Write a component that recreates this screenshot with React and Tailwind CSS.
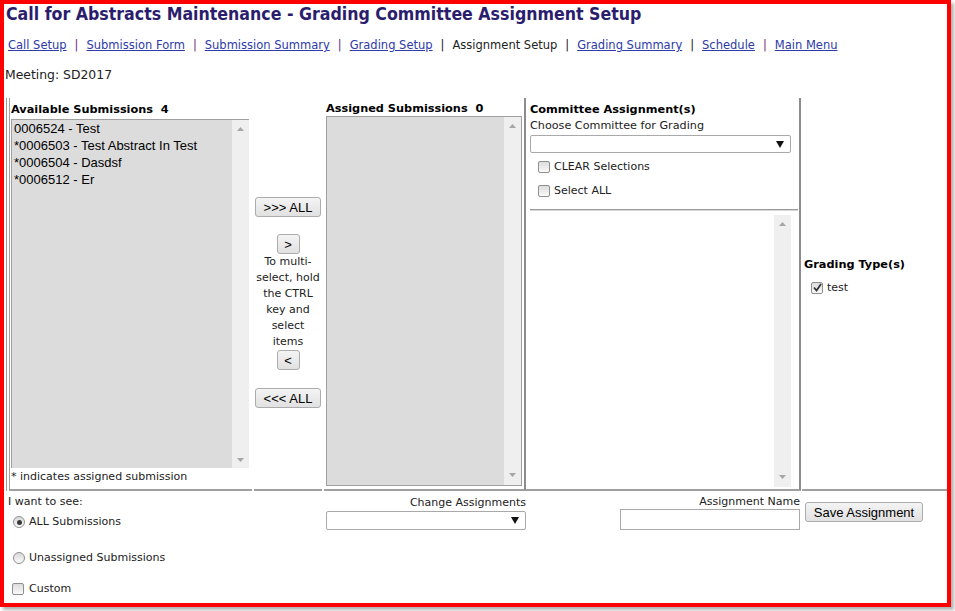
import React from "react";

const Arrow = ({ dir }) => (
  <svg width="7" height="4" viewBox="0 0 7 4">
    {dir === "up" ? (
      <path d="M0 4 L3.5 0 L7 4 Z" fill="#a6a6a6" />
    ) : (
      <path d="M0 0 L7 0 L3.5 4 Z" fill="#a6a6a6" />
    )}
  </svg>
);

const SelArrow = () => (
  <svg width="8" height="7" viewBox="0 0 8 7">
    <path d="M0 0 L8 0 L4 7 Z" fill="#111" />
  </svg>
);

const Btn = ({ children, className }) => (
  <div
    className={`flex items-center justify-center h-[20px] border border-[#acacac] rounded-[3px] bg-linear-to-b from-[#f4f4f4] to-[#e1e1e1] font-['Liberation_Sans',Arial,sans-serif] text-[13px] leading-none text-black ${className}`}
  >
    {children}
  </div>
);

const Check = ({ checked }) => (
  <span className="relative inline-block w-[12px] h-[12px] border border-[#8f8f8f] rounded-[2px] bg-linear-to-b from-[#dcdcdc] to-[#fafafa] shrink-0">
    {checked && (
      <svg className="absolute left-[1px] top-[0px]" width="9" height="9" viewBox="0 0 9 9">
        <path d="M1 4.5 L3.5 7.5 L8 1" stroke="#333" strokeWidth="1.8" fill="none" />
      </svg>
    )}
  </span>
);

const Radio = ({ checked }) => (
  <span className="relative flex items-center justify-center w-[12px] h-[12px] border border-[#8f8f8f] rounded-full bg-linear-to-b from-[#d8d8d8] to-[#fbfbfb] shrink-0">
    {checked && <span className="w-[5px] h-[5px] rounded-full bg-[#3a3a3a]" />}
  </span>
);

const Select = ({ className }) => (
  <div className={`flex items-center justify-end bg-white border border-[#a9a9a9] rounded-[2px] pr-[6px] ${className}`}>
    <SelArrow />
  </div>
);

export default function App() {
  const items = [
    "0006524 - Test",
    "*0006503 - Test Abstract In Test",
    "*0006504 - Dasdsf",
    "*0006512 - Er",
  ];
  return (
    <div className="w-[955px] h-[611px] bg-white">
      <div className="w-[951px] h-[607px] border-4 border-[#ff0000] shadow-[3px_3px_3px_rgba(0,0,0,0.3)] overflow-hidden font-['DejaVu_Sans',Verdana,sans-serif] text-[#222] flex flex-col">
        {/* title */}
        <div className="pl-[2px] h-[20px] leading-[20px] text-[17.6px] font-bold text-[#2b1d6e] font-['DejaVu_Sans_Condensed','DejaVu_Sans',sans-serif] whitespace-nowrap">
          Call for Abstracts Maintenance - Grading Committee Assignment Setup
        </div>
        {/* nav */}
        <div className="mt-[13px] pl-[4px] h-[16px] leading-[16px] text-[11.5px] flex items-center whitespace-nowrap">
          <a className="underline text-[#2d3aa8]">Call Setup</a>
          <span className="mx-[8px] text-[#7a2a7a]">|</span>
          <a className="underline text-[#2d3aa8]">Submission Form</a>
          <span className="mx-[8px] text-[#7a2a7a]">|</span>
          <a className="underline text-[#2d3aa8]">Submission Summary</a>
          <span className="mx-[8px] text-[#7a2a7a]">|</span>
          <a className="underline text-[#2d3aa8]">Grading Setup</a>
          <span className="mx-[8px] text-[#222]">|</span>
          <span className="text-[#222]">Assignment Setup</span>
          <span className="mx-[8px] text-[#222]">|</span>
          <a className="underline text-[#2d3aa8]">Grading Summary</a>
          <span className="mx-[8px] text-[#222]">|</span>
          <a className="underline text-[#2d3aa8]">Schedule</a>
          <span className="mx-[8px] text-[#7a2a7a]">|</span>
          <a className="underline text-[#2d3aa8]">Main Menu</a>
        </div>
        {/* meeting */}
        <div className="mt-[14px] pl-[1px] h-[16px] leading-[16px] text-[12.4px]">Meeting: SD2017</div>

        {/* table */}
        <div className="mt-[15px] ml-[2px] h-[393px] flex border-l border-[#9a9a9a] pl-[2px]">
          {/* col1 */}
          <div className="w-[243px] flex flex-col border-l border-b-2 border-[#a0a0a0]">
            <div className="pl-[1px] pt-[5px] leading-[14px] text-[11.3px] font-bold text-black whitespace-pre">
              {"Available Submissions  4"}
            </div>
            <div className="ml-[1px] mt-[2px] w-[238px] h-[349px] flex border-t border-l border-[#a0a0a0] bg-[#dcdcdc]">
              <div className="flex-1 pl-[2px] font-['Liberation_Sans',Arial,sans-serif] text-[13px] leading-[17px] text-black">
                {items.map((t) => (
                  <div key={t}>{t}</div>
                ))}
              </div>
              <div className="w-[17px] bg-[#efefef] flex flex-col items-center justify-between pt-[7px] pb-[6px]">
                <Arrow dir="up" />
                <Arrow dir="down" />
              </div>
            </div>
            <div className="mt-[2px] pl-[1px] leading-[14px] text-[11px]">* indicates assigned submission</div>
          </div>

          {/* col2 */}
          <div className="ml-[2px] w-[68px] flex flex-col items-center border-b-2 border-[#a0a0a0] pt-[99px]">
            <Btn className="w-[66px]">&gt;&gt;&gt; ALL</Btn>
            <Btn className="w-[23px] mt-[17px]">&gt;</Btn>
            <div className="text-center text-[11px] leading-[16px] whitespace-nowrap">
              To multi-
              <br />
              select, hold
              <br />
              the CTRL
              <br />
              key and
              <br />
              select
              <br />
              items
            </div>
            <Btn className="w-[23px]">&lt;</Btn>
            <Btn className="w-[66px] mt-[18px]">&lt;&lt;&lt; ALL</Btn>
          </div>

          {/* col3 */}
          <div className="ml-[2px] w-[200px] flex flex-col border-b-2 border-[#a0a0a0]">
            <div className="pl-[2px] pt-[4px] leading-[14px] text-[11.3px] font-bold text-black whitespace-pre">
              {"Assigned Submissions  0"}
            </div>
            <div className="ml-[2px] w-[196px] h-[370px] flex border border-[#a0a0a0] bg-[#dcdcdc]">
              <div className="flex-1" />
              <div className="w-[17px] bg-[#efefef] flex flex-col items-center justify-between pt-[7px] pb-[8px]">
                <Arrow dir="up" />
                <Arrow dir="down" />
              </div>
            </div>
          </div>

          {/* col4 */}
          <div className="w-[277px] flex flex-col border-l-2 border-r-2 border-b-2 border-l-[#8c8c8c] border-r-[#8c8c8c] border-b-[#a0a0a0]">
            <div className="pl-[4px] pt-[5px] leading-[14px] text-[11.3px] font-bold text-black">Committee Assignment(s)</div>
            <div className="pl-[4px] mt-[2px] leading-[14px] text-[11.2px]">Choose Committee for Grading</div>
            <Select className="ml-[4px] mt-[2px] w-[261px] h-[18px]" />
            <div className="ml-[12px] mt-[7px] h-[14px] flex items-center gap-[4px] text-[11px]">
              <Check />
              <span>CLEAR Selections</span>
            </div>
            <div className="ml-[12px] mt-[10px] h-[14px] flex items-center gap-[4px] text-[11px]">
              <Check />
              <span>Select ALL</span>
            </div>
            <div className="ml-[4px] mr-[1px] mt-[11px] h-[2px] border-t border-b border-t-[#9a9a9a] border-b-[#d8d8d8]" />
            <div className="ml-[4px] mt-[4px] w-[261px] h-[272px] flex bg-white">
              <div className="flex-1" />
              <div className="w-[17px] bg-[#efefef] flex flex-col items-center justify-between pt-[7px] pb-[8px]">
                <Arrow dir="up" />
                <Arrow dir="down" />
              </div>
            </div>
          </div>

          {/* col5 */}
          <div className="ml-[1px] flex-1 flex flex-col border-b-2 border-[#a0a0a0] pl-[2px] pt-[160px]">
            <div className="leading-[14px] text-[11.3px] font-bold text-black">Grading Type(s)</div>
            <div className="ml-[7px] mt-[9px] h-[14px] flex items-center gap-[4px] text-[11px]">
              <Check checked />
              <span>test</span>
            </div>
          </div>
        </div>

        {/* bottom row */}
        <div className="flex flex-1">
          <div className="w-[320px] pl-[4px] pt-[4px] text-[11px]">
            <div className="leading-[14px]">I want to see:</div>
            <div className="mt-[5px] ml-[5px] h-[16px] flex items-center gap-[4px]">
              <Radio checked />
              <span>ALL Submissions</span>
            </div>
            <div className="mt-[20px] ml-[5px] h-[16px] flex items-center gap-[4px]">
              <Radio />
              <span>Unassigned Submissions</span>
            </div>
            <div className="mt-[15px] ml-[4px] h-[16px] flex items-center gap-[5px]">
              <Check />
              <span>Custom</span>
            </div>
          </div>
          <div className="w-[202px] flex flex-col items-end pt-[5px] text-[11px]">
            <div className="leading-[14px]">Change Assignments</div>
            <Select className="mt-[1px] w-[200px] h-[19px]" />
          </div>
          <div className="w-[274px] flex flex-col items-end pt-[4px] text-[11px]">
            <div className="leading-[14px]">Assignment Name</div>
            <div className="w-[180px] h-[21px] border border-[#a9a9a9] bg-white" />
          </div>
          <div className="pl-[5px] pt-[11px]">
            <Btn className="w-[118px]">Save Assignment</Btn>
          </div>
        </div>
      </div>
    </div>
  );
}
